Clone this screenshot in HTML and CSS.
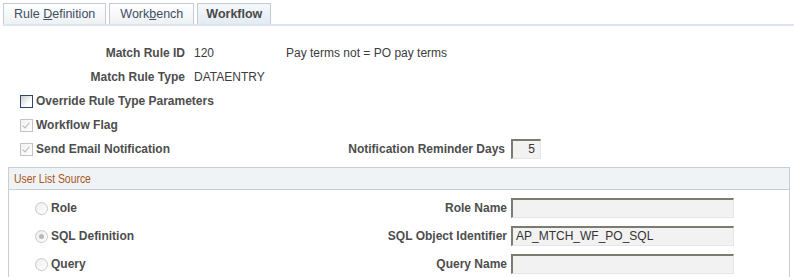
FILE: index.html
```html
<!DOCTYPE html>
<html>
<head>
    <title>Workflow</title>
    <link rel="stylesheet" href="styles.css">
</head>
<body>
    <div class="tabs">
        <div class="tab">Rule <u>D</u>efinition</div>
        <div class="tab">Work<u>b</u>ench</div>
        <div class="tab active">Workflow</div>
    </div>
    <div class="tab-line"></div>

    <div class="page">
        <div class="row">
            <span class="lbl">Match Rule ID</span>
            <span class="val short">120</span>
            <span class="val">Pay terms not = PO pay terms</span>
        </div>
        <div class="row">
            <span class="lbl">Match Rule Type</span>
            <span class="val">DATAENTRY</span>
        </div>
        <div class="row chk-row">
            <span class="chk on"></span>
            <span class="chk-text">Override Rule Type Parameters</span>
        </div>
        <div class="row chk-row">
            <span class="chk off checked"></span>
            <span class="chk-text">Workflow Flag</span>
        </div>
        <div class="row chk-row">
            <div class="chk-cell">
                <span class="chk off checked"></span>
                <span class="chk-text">Send Email Notification</span>
            </div>
            <span class="side-lbl">Notification Reminder Days</span>
            <span class="field num">5</span>
        </div>
    </div>

    <div class="group">
        <div class="group-head"><span class="group-title">User List Source</span></div>
        <div class="group-body">
            <div class="grow">
                <div class="radio-cell"><span class="radio"></span>Role</div>
                <span class="grp-lbl">Role Name</span>
                <span class="field wide"></span>
            </div>
            <div class="grow">
                <div class="radio-cell"><span class="radio sel"></span>SQL Definition</div>
                <span class="grp-lbl">SQL Object Identifier</span>
                <span class="field wide">AP_MTCH_WF_PO_SQL</span>
            </div>
            <div class="grow">
                <div class="radio-cell"><span class="radio"></span>Query</div>
                <span class="grp-lbl">Query Name</span>
                <span class="field wide"></span>
            </div>
        </div>
    </div>
</body>
</html>
```

FILE: styles.css
```css
body {
    margin: 0;
    font-family: "Liberation Sans", Arial, sans-serif;
    font-size: 12px;
    color: #333;
    background: #ffffff;
}
.tabs {
    display: flex;
    gap: 3px;
    padding: 3px 0 0 3px;
    height: 21px;
}
.tab {
    height: 20px;
    line-height: 20px;
    padding: 0 10px;
    font-size: 12.5px;
    color: #3d4f63;
    border: 1px solid #c5cbd1;
    border-bottom: none;
    background: linear-gradient(#ffffff, #eef1f3);
}
.tab u {
    text-decoration: underline;
}
.tab.active {
    font-weight: bold;
    font-size: 12.5px;
    color: #4a4a4a;
    padding: 0 8px;
    background: linear-gradient(#f4f8fb, #e3ebf2);
}
.tab-line {
    height: 2px;
    margin-left: 3px;
    background: #dde6ef;
}
.page {
    padding-top: 15px;
}
.row {
    display: flex;
    align-items: center;
    height: 24px;
}
.lbl {
    width: 185px;
    text-align: right;
    font-weight: bold;
    color: #4d4d4d;
    padding-right: 9px;
}
.val {
    color: #3c3c3c;
}
.val.short {
    width: 92px;
}
.chk-row {
    padding-left: 20px;
}
.chk-cell {
    display: flex;
    align-items: center;
    width: 315px;
}
.chk {
    position: relative;
    box-sizing: border-box;
    width: 13px;
    height: 13px;
    margin-right: 3px;
    border: 1px solid #c4c4c4;
    background: linear-gradient(135deg, #f2f2f2, #ffffff);
}
.chk.on {
    border-color: #2d4866;
    background: linear-gradient(135deg, #cfcfcf, #ffffff 70%);
}
.chk.checked::after {
    content: "";
    position: absolute;
    left: 3px;
    top: 1px;
    width: 3px;
    height: 6px;
    border: solid #b5b5b5;
    border-width: 0 1px 1px 0;
    transform: rotate(40deg);
}
.chk-text {
    font-weight: bold;
    color: #4d4d4d;
}
.side-lbl {
    width: 170px;
    text-align: right;
    font-weight: bold;
    color: #4d4d4d;
    margin-right: 6px;
}
.field {
    display: inline-block;
    box-sizing: border-box;
    height: 20px;
    line-height: 17px;
    padding: 0 3px;
    background: #f2f2f2;
    border-top: 2px solid #7b7b70;
    border-left: 2px solid #7b7b70;
    border-right: 1px solid #e6e6e6;
    border-bottom: 1px solid #e6e6e6;
    color: #333;
}
.field.num {
    width: 30px;
    text-align: right;
    padding-right: 5px;
}
.field.wide {
    width: 223px;
}
.group {
    margin: 6px 4px 0 8px;
    border: 1px solid #c9ced3;
}
.group-head {
    height: 21px;
    line-height: 21px;
    padding-left: 5px;
    background: #eff3f5;
    border-bottom: 1px solid #c9ced3;
}
.group-title {
    display: inline-block;
    color: #a8551a;
    font-size: 13px;
    transform: scaleX(0.8);
    transform-origin: left center;
}
.group-body {
    padding-top: 4px;
}
.grow {
    display: flex;
    align-items: center;
    height: 28px;
}
.radio-cell {
    display: flex;
    align-items: center;
    width: 174px;
    padding-left: 26px;
    font-weight: bold;
    color: #4d4d4d;
}
.radio {
    position: relative;
    box-sizing: border-box;
    width: 13px;
    height: 13px;
    margin-right: 3px;
    border: 1px solid #c8c8c8;
    border-radius: 50%;
    background: linear-gradient(135deg, #ededed, #ffffff);
}
.radio.sel::after {
    content: "";
    position: absolute;
    left: 3px;
    top: 3px;
    width: 5px;
    height: 5px;
    border-radius: 50%;
    background: #b8b8b8;
}
.grp-lbl {
    width: 298px;
    text-align: right;
    font-weight: bold;
    color: #4d4d4d;
    margin-right: 4px;
}
```
